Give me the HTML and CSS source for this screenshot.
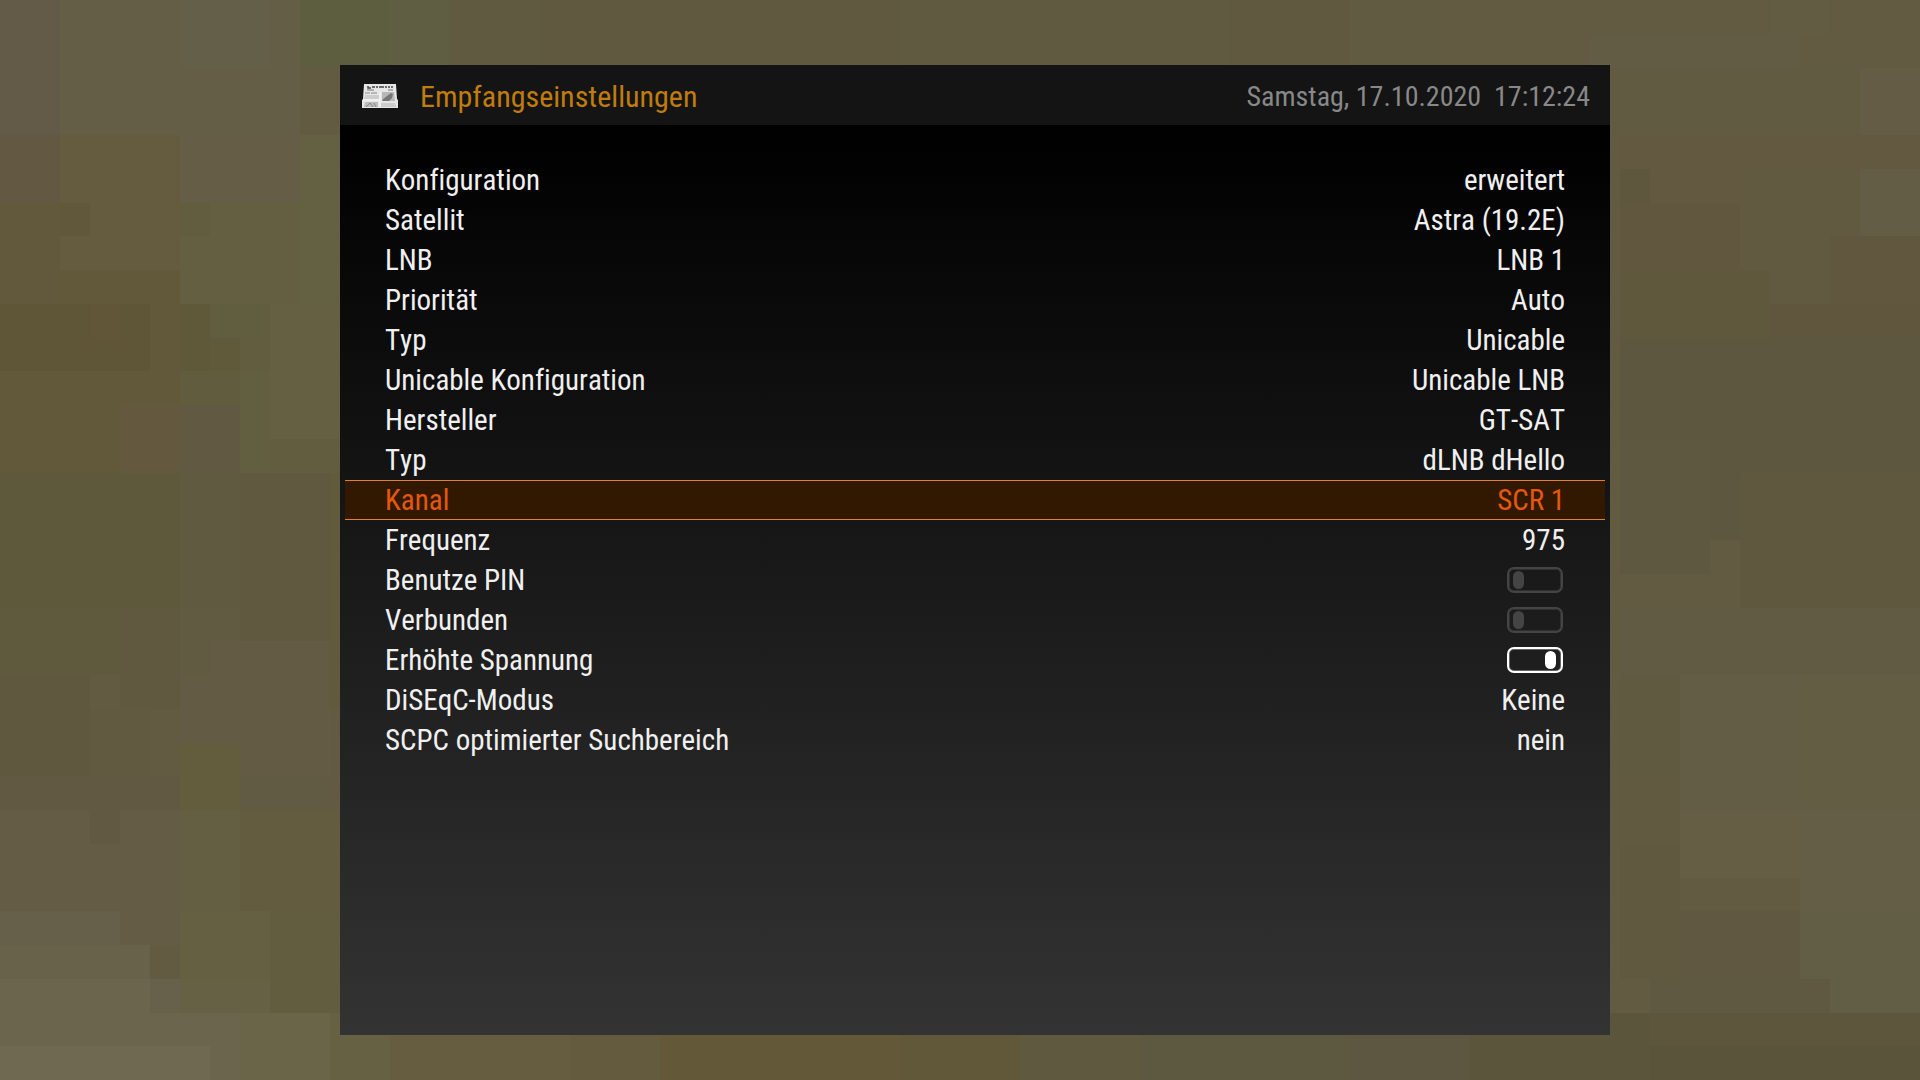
FILE: index.html
```html
<!DOCTYPE html>
<html lang="de">
<head>
    <meta charset="UTF-8">
    <meta name="viewport" content="width=device-width, initial-scale=1.0">
    <title>Empfangseinstellungen</title>
    <link rel="stylesheet" href="styles.css">
</head>
<body>
    <!-- Blocky TV picture behind the menu, one unit = one tile -->
    <svg class="backdrop" viewBox="0 0 64 32" preserveAspectRatio="none" shape-rendering="crispEdges" aria-hidden="true">
        <rect width="64" height="32" fill="#625b41"/>
        <!-- left -->
        <rect width="2" height="4" fill="#635b48"/>
        <rect x="2" width="8" height="4" fill="#655e47"/>
        <rect x="6" width="3" height="2" fill="#645f48"/>
        <rect x="10" width="3" height="2" fill="#5d5d40"/>
        <rect x="10" y="2" width="2" height="2" fill="#625b41"/>
        <rect y="4" width="2" height="2" fill="#635842"/>
        <rect x="2" y="4" width="4" height="4" fill="#655b3f"/>
        <rect x="6" y="4" width="4" height="2" fill="#655d46"/>
        <rect x="10" y="4" width="2" height="9" fill="#646042"/>
        <rect x="6" y="6" width="4" height="3" fill="#645f41"/>
        <rect x="6" y="6" width="1" height="1" fill="#625d3f"/>
        <rect y="6" width="2" height="3" fill="#62583b"/>
        <rect x="2" y="6" width="1" height="1" fill="#61573b"/>
        <rect x="2" y="8" width="4" height="1" fill="#62593b"/>
        <rect y="9" width="5" height="2" fill="#5f5637"/>
        <rect x="3" y="9" width="1" height="1" fill="#615738"/>
        <rect x="5" y="9" width="1" height="2" fill="#62593a"/>
        <rect x="6" y="9" width="1" height="2" fill="#5f593a"/>
        <rect x="7" y="9" width="2" height="1" fill="#615d3f"/>
        <rect x="7" y="10" width="1" height="1" fill="#605a3b"/>
        <rect x="8" y="10" width="1" height="1" fill="#635d40"/>
        <rect x="9" y="9" width="2" height="4" fill="#646041"/>
        <rect y="11" width="6" height="3" fill="#62593b"/>
        <rect x="4" y="12" width="2" height="2" fill="#64593e"/>
        <rect x="6" y="11" width="2" height="1" fill="#615c3e"/>
        <rect x="6" y="12" width="2" height="2" fill="#615942"/>
        <rect x="8" y="11" width="1" height="3" fill="#625e40"/>
        <rect x="9" y="13" width="3" height="1" fill="#615d3e"/>
        <rect y="14" width="6" height="4" fill="#5f593b"/>
        <rect y="18" width="4" height="2" fill="#5f593d"/>
        <rect x="6" y="14" width="2" height="4" fill="#5f5a40"/>
        <rect x="8" y="14" width="3" height="5" fill="#605940"/>
        <rect x="11" y="14" width="1" height="7" fill="#625a3c"/>
        <rect x="6" y="18" width="2" height="2" fill="#605b41"/>
        <rect x="4" y="18" width="2" height="3" fill="#605940"/>
        <rect y="20" width="3" height="3" fill="#5f583f"/>
        <rect x="3" y="21" width="2" height="3" fill="#615a41"/>
        <rect x="7" y="19" width="4" height="4" fill="#635b44"/>
        <rect x="6" y="20" width="2" height="2" fill="#635b44"/>
        <rect x="6" y="22" width="2" height="2" fill="#635d3e"/>
        <rect x="8" y="23" width="3" height="1" fill="#625b43"/>
        <rect y="23" width="6" height="1" fill="#615942"/>
        <rect y="24" width="6" height="4" fill="#645c45"/>
        <rect x="3" y="24" width="1" height="1" fill="#615941"/>
        <rect x="6" y="24" width="2" height="3" fill="#645f42"/>
        <rect x="8" y="24" width="4" height="3" fill="#635c3e"/>
        <rect y="27" width="4" height="1" fill="#665f49"/>
        <rect x="6" y="27" width="3" height="2" fill="#656042"/>
        <rect x="9" y="27" width="3" height="3" fill="#635d40"/>
        <rect y="28" width="5" height="1" fill="#68624b"/>
        <rect y="29" width="5" height="3" fill="#6c654e"/>
        <rect x="5" y="29" width="1" height="1" fill="#67604a"/>
        <rect x="6" y="29" width="3" height="1" fill="#666145"/>
        <rect x="5" y="30" width="3" height="2" fill="#6b654e"/>
        <rect y="31" width="7" height="1" fill="#6f6951"/>
        <rect x="8" y="30" width="3" height="2" fill="#6a6449"/>
        <rect x="11" y="30" width="3" height="2" fill="#666143"/>
        <!-- strips above and below the menu -->
        <rect x="13" width="2" height="2" fill="#5f5d42"/>
        <rect x="15" width="3" height="2" fill="#605b40"/>
        <rect x="18" width="12" height="2" fill="#60583f"/>
        <rect x="30" width="4" height="2" fill="#5f5a40"/>
        <rect x="34" width="7" height="2" fill="#605a40"/>
        <rect x="41" width="4" height="2" fill="#61593f"/>
        <rect x="45" width="3" height="2" fill="#605b41"/>
        <rect x="48" width="9" height="2" fill="#625b42"/>
        <rect x="13" y="30" width="6" height="2" fill="#665d41"/>
        <rect x="19" y="30" width="3" height="2" fill="#645b3e"/>
        <rect x="22" y="30" width="8" height="2" fill="#635939"/>
        <rect x="30" y="30" width="4" height="2" fill="#605839"/>
        <rect x="34" y="30" width="4" height="2" fill="#5f593f"/>
        <rect x="38" y="30" width="7" height="2" fill="#5d5941"/>
        <rect x="45" y="30" width="4" height="2" fill="#5d5742"/>
        <rect x="49" y="30" width="6" height="2" fill="#5b553b"/>
        <!-- right -->
        <rect x="53" y="1" width="7" height="1" fill="#615c43"/>
        <rect x="59" width="2" height="1" fill="#615c42"/>
        <rect x="54" y="2" width="8" height="2" fill="#605b41"/>
        <rect x="62" y="2" width="2" height="2" fill="#645c45"/>
        <rect x="54" y="4" width="10" height="2" fill="#635940"/>
        <rect x="54" y="5" width="1" height="1" fill="#5e573e"/>
        <rect x="54" y="6" width="4" height="3" fill="#61573f"/>
        <rect x="58" y="5" width="5" height="4" fill="#625941"/>
        <rect x="62" y="5" width="2" height="2" fill="#645d46"/>
        <rect x="61" y="7" width="3" height="3" fill="#61573f"/>
        <rect x="54" y="8" width="5" height="2" fill="#5f583d"/>
        <rect x="59" y="9" width="5" height="1" fill="#60563d"/>
        <rect x="54" y="10" width="10" height="6" fill="#5e5740"/>
        <rect x="54" y="13" width="3" height="4" fill="#5f5841"/>
        <rect x="58" y="14" width="6" height="4" fill="#5f573e"/>
        <rect x="54" y="18" width="10" height="2" fill="#605b42"/>
        <rect x="54" y="20" width="2" height="3" fill="#605a41"/>
        <rect x="56" y="20" width="4" height="4" fill="#645d46"/>
        <rect x="60" y="20" width="4" height="4" fill="#635d43"/>
        <rect x="54" y="23" width="2" height="3" fill="#625a40"/>
        <rect x="56" y="24" width="4" height="2" fill="#655e45"/>
        <rect x="60" y="24" width="4" height="3" fill="#645e47"/>
        <rect x="54" y="25" width="2" height="4" fill="#60583f"/>
        <rect x="56" y="26" width="4" height="1" fill="#625b42"/>
        <rect x="56" y="27" width="4" height="2" fill="#605840"/>
        <rect x="60" y="27" width="4" height="3" fill="#625d45"/>
        <rect x="55" y="29" width="6" height="1" fill="#5f5941"/>
        <rect x="55" y="30" width="9" height="1" fill="#5d563d"/>
        <rect x="55" y="31" width="9" height="1" fill="#5a543a"/>
    </svg>

    <main class="menu">
        <header class="menu-header">
            <svg class="news-icon" viewBox="0 0 36 24" aria-hidden="true">
                <path d="M2 0h32l1 15 1 1v8H0v-8l1-1z" fill="#e6e6e6"/>
                <path d="M6 2v2h3M10 3h3M14 3h2M17 3h3M21 2v2M24 2v2M26 3h2M29 3h2" stroke="#444" stroke-width="1.500" fill="none"/>
                <path d="M5 6h7M26 6h5" stroke="#777"/>
                <path d="M3 9h5M9 9h6" stroke="#888"/>
                <path d="M3 12h14M2 14h15M19 20h14M19 22h15" stroke="#b4b4b4"/>
                <path d="M20 8h12l1 9H20z" fill="#b8b8b8"/>
                <path d="M20 16l5-4 4-3 2 1-1 4-3 3h-6z" fill="#777"/>
                <path d="M3 18h13v5H2z" fill="#bcbcbc"/>
                <path d="M4 23l4-4 3 4M12 19l2 4" stroke="#888" fill="none"/>
                <path d="M18 8v15M1 16h17" stroke="#f8f8f8"/>
            </svg>
            <h1>Empfangseinstellungen</h1>
            <time class="clock" datetime="2020-10-17T17:12:24">Samstag, 17.10.2020&nbsp; 17:12:24</time>
        </header>

        <ul class="settings">
            <li class="setting"><span>Konfiguration</span><span>erweitert</span></li>
            <li class="setting"><span>Satellit</span><span>Astra (19.2E)</span></li>
            <li class="setting"><span>LNB</span><span>LNB 1</span></li>
            <li class="setting"><span>Priorität</span><span>Auto</span></li>
            <li class="setting"><span>Typ</span><span>Unicable</span></li>
            <li class="setting"><span>Unicable Konfiguration</span><span>Unicable LNB</span></li>
            <li class="setting"><span>Hersteller</span><span>GT-SAT</span></li>
            <li class="setting"><span>Typ</span><span>dLNB dHello</span></li>
            <li class="setting selected"><span>Kanal</span><span>SCR 1</span></li>
            <li class="setting"><span>Frequenz</span><span>975</span></li>
            <li class="setting">
                <label for="pin">Benutze PIN</label>
                <input class="toggle" type="checkbox" id="pin">
            </li>
            <li class="setting">
                <label for="connected">Verbunden</label>
                <input class="toggle" type="checkbox" id="connected">
            </li>
            <li class="setting">
                <label for="voltage">Erhöhte Spannung</label>
                <input class="toggle" type="checkbox" id="voltage" checked>
            </li>
            <li class="setting"><span>DiSEqC-Modus</span><span>Keine</span></li>
            <li class="setting"><span>SCPC optimierter Suchbereich</span><span>nein</span></li>
        </ul>
    </main>
</body>
</html>
```
FILE: styles.css
```css
* {
    box-sizing: border-box;
}

body {
    margin: 0;
    min-height: 100vh;
    display: grid;
    background-color: #625b41;
    font-family: "Roboto Condensed", Roboto, sans-serif;
    font-size: 29px;
    font-kerning: none;
    font-variant-ligatures: none;
    color: #f0f0f0;
}

/* picture and menu share the one grid cell */
.backdrop,
.menu {
    grid-area: 1 / 1;
}

.backdrop {
    width: 100%;
    height: 100%;
}

.menu {
    margin: 65px 310px 45px 340px;
    background: linear-gradient(#000000 60px, #333333);
}

.menu-header {
    height: 60px;
    padding: 2px 20px 0 22px;
    display: flex;
    align-items: center;
    background-color: #141414;
}

.news-icon {
    width: 36px;
    height: 24px;
    margin-right: 22px;
}

.menu-header h1 {
    margin: 0;
    font-size: 30px;
    font-weight: 400;
    color: #c07c0c;
}

.clock {
    margin-left: auto;
    font-size: 28px;
    color: #888888;
}

.settings {
    list-style: none;
    margin: 0;
    padding: 35px 5px;
}

.setting {
    height: 40px;
    padding: 0 40px;
    display: flex;
    justify-content: space-between;
    align-items: center;
    border-top: 1px solid transparent;
    border-bottom: 1px solid transparent;
}

.setting.selected {
    background-color: #331800;
    border-color: #e0802a;
    color: #e4580c;
}

.toggle {
    appearance: none;
    width: 56px;
    height: 26px;
    margin: 0 2px;
    padding: 0 5px 0 4px;
    display: flex;
    align-items: center;
    border: 2px solid currentColor;
    border-radius: 7px;
    box-shadow: inset 0 0 0 1px #303030;
    color: #444444;
}

.toggle::before {
    content: "";
    width: 11px;
    height: 18px;
    border-radius: 6px;
    background-color: currentColor;
}

.toggle:checked {
    justify-content: flex-end;
    box-shadow: inset 0 0 0 1px #666666;
    color: #ffffff;
}
```
